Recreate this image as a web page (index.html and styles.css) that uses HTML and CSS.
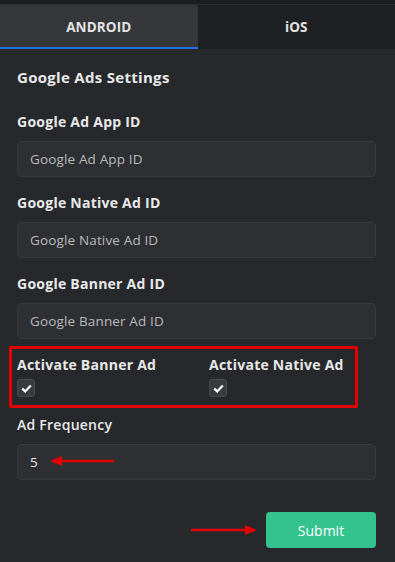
FILE: index.html
```html
<!DOCTYPE html>
<html lang="en">
<head>
<meta charset="UTF-8">
<meta name="viewport" content="width=device-width, initial-scale=1.0">
<title>Ads Settings</title>
<link rel="stylesheet" href="styles.css">
</head>
<body>
<div class="topbar"></div>
<div class="panel">
    <div class="tabs">
        <div class="tab active">ANDROID</div>
        <div class="tab">iOS</div>
    </div>
    <div class="content">
        <h2>Google Ads Settings</h2>
        <div class="form-group">
            <label for="appId">Google Ad App ID</label>
            <input type="text" id="appId" placeholder="Google Ad App ID">
        </div>
        <div class="form-group">
            <label for="nativeId">Google Native Ad ID</label>
            <input type="text" id="nativeId" placeholder="Google Native Ad ID">
        </div>
        <div class="form-group">
            <label for="bannerId">Google Banner Ad ID</label>
            <input type="text" id="bannerId" placeholder="Google Banner Ad ID">
        </div>
        <div class="checks">
            <div class="check">
                <span class="check-label">Activate Banner Ad</span>
                <span class="box"><svg width="11" height="9" viewBox="0 0 11 9"><path d="M1.2 4.6 L4.2 7.4 L9.8 1.6" fill="none" stroke="#fff" stroke-width="2.2"/></svg></span>
            </div>
            <div class="check">
                <span class="check-label">Activate Native Ad</span>
                <span class="box"><svg width="11" height="9" viewBox="0 0 11 9"><path d="M1.2 4.6 L4.2 7.4 L9.8 1.6" fill="none" stroke="#fff" stroke-width="2.2"/></svg></span>
            </div>
        </div>
        <div class="form-group freq">
            <label for="freq">Ad Frequency</label>
            <div class="field">
                <input type="text" id="freq" value="5">
                <!-- annotation arrow -->
                <svg class="arrow arrow-left" width="66" height="12" viewBox="0 0 66 12"><path d="M10 6 H64" stroke="#e30000" stroke-width="2.5"/><path d="M0 6 L12 1 L12 11 Z" fill="#e30000"/></svg>
            </div>
        </div>
        <div class="actions">
            <svg class="arrow-right" width="66" height="12" viewBox="0 0 66 12"><path d="M0 6 H56" stroke="#e30000" stroke-width="2.5"/><path d="M66 6 L54 1 L54 11 Z" fill="#e30000"/></svg>
            <button>Submit</button>
        </div>
    </div>
</div>
</body>
</html>
```

FILE: styles.css
```css
/* Dark ads settings panel */
body {
    font-family: "Open Sans", "Noto Sans", sans-serif;
    margin: 0;
    padding: 0;
    background-color: #27282b;
    color: #e9e9ea;
}
.topbar {
    height: 4px;
    background-color: #1c1d20;
    border-bottom: 1px solid #2c2d31;
}
.panel {
    background-color: #27282b;
}
.tabs {
    display: flex;
    height: 44px;
}
.tab {
    flex: 1;
    display: flex;
    align-items: center;
    justify-content: center;
    font-weight: 700;
    font-size: 13.5px;
    background-color: #1f2023;
    color: #e3e3e5;
    letter-spacing: 0.1px;
}
.tab.active {
    background-color: #36373b;
    border-bottom: 2px solid #1f73d9;
    border-top-right-radius: 3px;
    padding-top: 2px;
}
.content {
    padding: 18px 19px 14px 17px;
}
h2 {
    font-size: 15px;
    font-weight: 700;
    margin: 0 0 26px 0;
    line-height: 20px;
    letter-spacing: 0.3px;
}
.form-group {
    margin-bottom: 17px;
}
.form-group label {
    display: block;
    font-size: 14px;
    font-weight: 700;
    line-height: 18px;
    margin-bottom: 10px;
    letter-spacing: 0.25px;
}
.form-group input[type="text"] {
    box-sizing: border-box;
    width: 100%;
    height: 36px;
    padding: 0 12px;
    background-color: #2e2f33;
    border: 1px solid #393a3e;
    border-radius: 4px;
    font-family: inherit;
    font-size: 13.5px;
    color: #e6e6e8;
    outline: none;
    letter-spacing: 0.15px;
}
.form-group input::placeholder {
    color: #b9babd;
}
.checks {
    display: grid;
    grid-template-columns: 192px 1fr;
    margin: -10px 0 8px -8px;
    width: 338px;
    padding: 7px 0 8px 5px;
    border: 3px solid #e30000;
    border-radius: 2px;
}
.check {
    display: flex;
    flex-direction: column;
    gap: 5px;
}
.check-label {
    font-size: 14px;
    font-weight: 700;
    line-height: 18px;
    letter-spacing: 0.25px;
}
.box {
    width: 16px;
    height: 16px;
    background-color: #3a3b3f;
    border: 1px solid #4a4b50;
    border-radius: 3px;
    display: flex;
    align-items: center;
    justify-content: center;
}
.freq label {
    font-weight: 600;
}
.field {
    position: relative;
}
.arrow {
    position: absolute;
    left: 33px;
    top: 11px;
}
.actions {
    display: flex;
    justify-content: flex-end;
    align-items: center;
    gap: 9px;
    margin-top: 32px;
}
.actions button {
    width: 110px;
    height: 36px;
    border: none;
    border-radius: 4px;
    background-color: #34c38f;
    color: #fff;
    font-family: inherit;
    font-size: 14px;
    cursor: pointer;
}
```
